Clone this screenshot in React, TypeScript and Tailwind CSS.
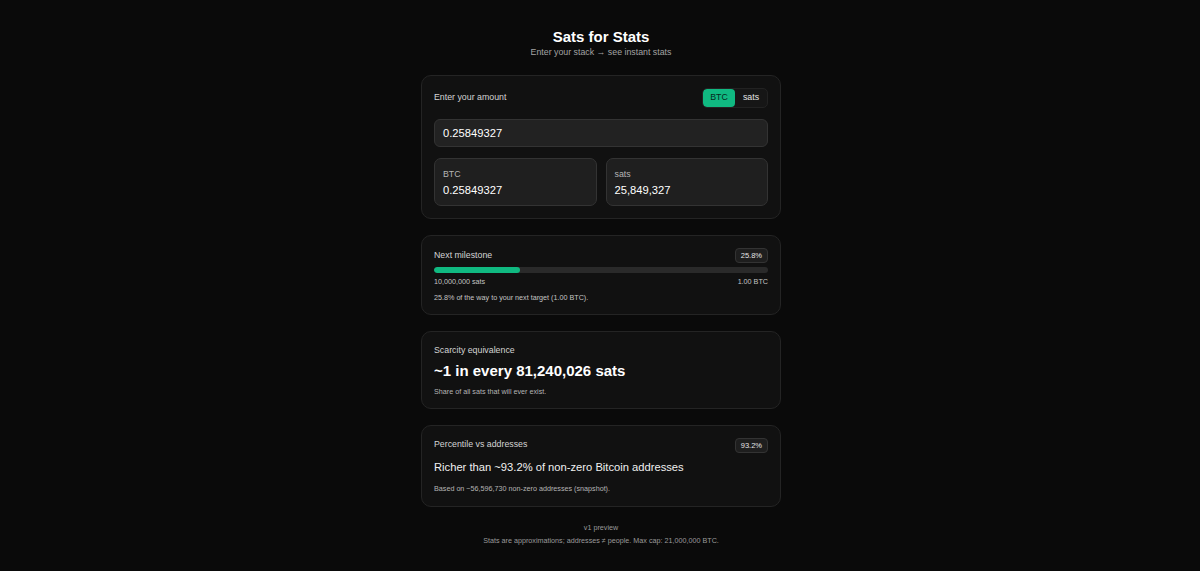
import React from 'react';

const Badge = ({ children }: { children: React.ReactNode }) => (
  <span className="rounded-[4px] border border-[#333] bg-[#1e1e1e] px-[5px] text-[7.5px] leading-[13px] text-[#e5e5e5]">
    {children}
  </span>
);

const Card = ({ children, className = '' }: { children: React.ReactNode; className?: string }) => (
  <div className={`rounded-[10px] border border-[#242424] bg-[#111111] px-3 ${className}`}>{children}</div>
);

const App = () => {
  const progress = 25.8;

  return (
    <div
      className="min-h-screen bg-[#0a0a0a] text-white"
      style={{ fontFamily: '"Liberation Sans", Arial, sans-serif' }}
    >
      <div className="mx-auto w-[362px] pl-[2px] pt-[28px] pb-6">
        <div className="text-center">
          <h1 className="text-[15px] font-bold leading-[18px]">Sats for Stats</h1>
          <p className="text-[8.8px] leading-[12px] text-[#a3a3a3]">Enter your stack → see instant stats</p>
        </div>

        <div className="mt-[17px] flex flex-col gap-4">
          <Card className="pt-3 pb-3">
            <div className="flex items-center justify-between">
              <span className="text-[8.8px] text-[#d4d4d4]">Enter your amount</span>
              <div className="flex h-5 overflow-hidden rounded-[5px] border border-[#222] bg-[#161616]">
                <button className="w-8 rounded-[4px] bg-[#10b981] text-[8.8px] text-[#06291d]">BTC</button>
                <button className="w-8 text-[8.8px] text-[#e5e5e5]">sats</button>
              </div>
            </div>
            <div className="mt-[11px] flex h-7 items-center rounded-[6px] border border-[#333] bg-[#222] px-2 text-[11.2px] text-white">
              0.25849327
            </div>
            <div className="mt-[11px] grid grid-cols-2 gap-[9px]">
              <div className="flex h-12 flex-col justify-center rounded-[7px] border border-[#333] bg-[#1f1f1f] px-2">
                <span className="text-[8.8px] leading-[12px] text-[#b5b5b5]">BTC</span>
                <span className="mt-[3px] text-[11.2px] leading-[14px] text-white">0.25849327</span>
              </div>
              <div className="flex h-12 flex-col justify-center rounded-[7px] border border-[#333] bg-[#1f1f1f] px-2">
                <span className="text-[8.8px] leading-[12px] text-[#b5b5b5]">sats</span>
                <span className="mt-[3px] text-[11.2px] leading-[14px] text-white">25,849,327</span>
              </div>
            </div>
          </Card>

          <Card className="pt-3 pb-[11px]">
            <div className="flex h-[15px] items-center justify-between">
              <span className="text-[8.8px] text-[#d4d4d4]">Next milestone</span>
              <Badge>25.8%</Badge>
            </div>
            <div className="mt-1 h-[6px] w-full overflow-hidden rounded-full bg-[#2a2a2a]">
              <div className="h-full rounded-full bg-[#10b981]" style={{ width: `${progress}%` }} />
            </div>
            <div className="mt-[4px] flex justify-between text-[7.2px] leading-[10px] text-[#c4c4c4]">
              <span>10,000,000 sats</span>
              <span>1.00 BTC</span>
            </div>
            <p className="mt-[6px] text-[7.2px] leading-[10px] text-[#c4c4c4]">
              25.8% of the way to your next target (1.00 BTC).
            </p>
          </Card>

          <Card className="pt-[13px] pb-[11px]">
            <p className="text-[8.8px] leading-[10px] text-[#d4d4d4]">Scarcity equivalence</p>
            <p className="mt-[7px] text-[15px] font-bold leading-[18px]">~1 in every 81,240,026 sats</p>
            <p className="mt-[7px] text-[7.2px] leading-[10px] text-[#b5b5b5]">Share of all sats that will ever exist.</p>
          </Card>

          <Card className="pt-3 pb-3">
            <div className="flex h-[14px] items-center justify-between">
              <span className="text-[8.8px] text-[#d4d4d4]">Percentile vs addresses</span>
              <Badge>93.2%</Badge>
            </div>
            <p className="mt-[8px] text-[11.2px] leading-[14px] text-[#f0f0f0]">
              Richer than ~93.2% of non-zero Bitcoin addresses
            </p>
            <p className="mt-[10px] text-[7.2px] leading-[10px] text-[#b5b5b5]">
              Based on ~56,596,730 non-zero addresses (snapshot).
            </p>
          </Card>
        </div>

        <div className="mt-[14px] text-center text-[7.2px] leading-[13px] text-[#9a9a9a]">
          <p>v1 preview</p>
          <p>Stats are approximations; addresses ≠ people. Max cap: 21,000,000 BTC.</p>
        </div>
      </div>
    </div>
  );
};

export default App;
